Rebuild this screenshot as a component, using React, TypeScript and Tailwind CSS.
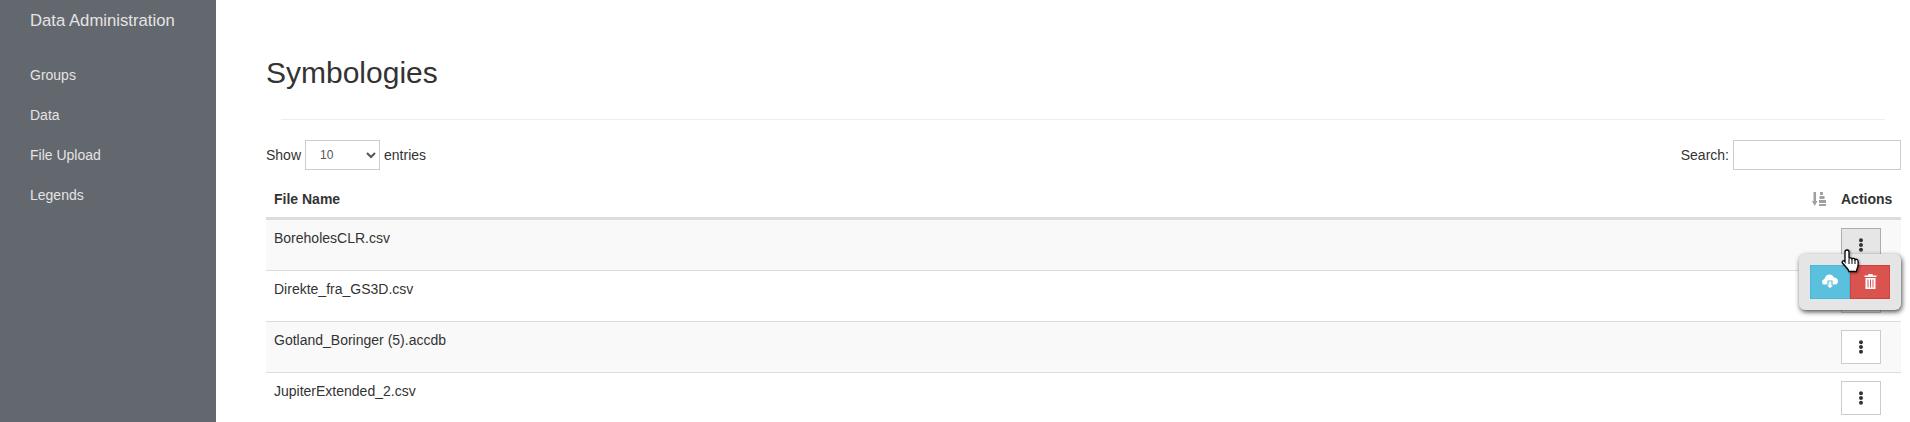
import { FaEllipsisV } from 'react-icons/fa'

const files = ['BoreholesCLR.csv', 'Direkte_fra_GS3D.csv', 'Gotland_Boringer (5).accdb', 'JupiterExtended_2.csv']
const navItems = ['Groups', 'Data', 'File Upload', 'Legends']

function HandCursor() {
  return (
    <svg width="20" height="26" viewBox="0 0 20 26" className="absolute left-0 top-[21px] z-20 drop-shadow-[1px_1px_1px_rgba(0,0,0,0.4)]">
      <path
        d="M6 1c1.300 0 2 .9 2 2v6.500c.5-1 2.700-1 3 .5.600-1 2.700-.8 3 .7.800-.8 2.800-.4 3 1.200.3 2 .2 4.300-.3 6.100-.5 1.500-1.200 2.500-1.200 4.500H8c-.4-1.800-1.600-3-3-4.500L1.500 14c-1-1.400.8-3 2.100-1.800L4 12.800V3c0-1.100.7-2 2-2z"
        fill="#fff"
        stroke="#000"
        strokeWidth="1.300"
      />
      <path d="M8 10v5M11 10.500V15M14 11v4" stroke="#000" strokeWidth="1" />
    </svg>
  )
}

function CloudDownloadIcon() {
  return (
    <svg width="16" height="15" viewBox="0 0 16 15">
      <path d="M3.500 11C1.500 11 0 9.700 0 8c0-1.500 1-2.700 2.500-3C3 2.500 5 .5 7.500.5c2 0 3.700 1.200 4.300 3 2.300 0 4.200 1.700 4.200 3.800 0 2.100-1.800 3.700-4 3.700z" fill="#fff" />
      <path d="M6 7h4v4h2.500L8 15l-4.500-4H6z" fill="#fff" stroke="#5bc0de" strokeWidth="1.200" />
    </svg>
  )
}

function TrashIcon() {
  return (
    <svg width="13" height="15" viewBox="0 0 13 15">
      <path d="M4.500 0h4l.5 1.500h3.500V3H.500V1.500H4z" fill="#fff" />
      <path d="M1.500 4h10v11h-10z" fill="#fff" />
      <path d="M3.500 5.500h1v8h-1zM6 5.500h1v8H6zM8.500 5.500h1v8h-1z" fill="#d9534f" />
    </svg>
  )
}

function SortIcon() {
  return (
    <svg width="14" height="14" viewBox="0 0 14 14" className="ml-auto block" fill="#a0a0a0">
      <path d="M1.500 0h2.500v9h1.500L2.750 14 0 9h1.500z" />
      <path d="M8 0h3v3H8zM7.500 4h5v3h-5zM7 8h7v3H7zM7 12h7v2H7z" />
    </svg>
  )
}

function ActionMenu() {
  return (
    <div className="absolute right-[-20px] top-[26px] z-10 flex rounded-md bg-[#e5e5e5] p-[11px] shadow-[1px_2px_5px_rgba(0,0,0,0.7)]">
      <button className="flex h-[34px] w-10 items-center justify-center border border-[#46b8da] bg-[#5bc0de]">
        <CloudDownloadIcon />
      </button>
      <button className="flex h-[34px] w-10 items-center justify-center border border-[#d43f3a] bg-[#d9534f]">
        <TrashIcon />
      </button>
    </div>
  )
}

export default function App() {
  return (
    <div className="flex h-[422px] overflow-hidden bg-white font-['Liberation_Sans',Arial,sans-serif] text-sm text-[#333]">
      <aside className="w-[216px] shrink-0 bg-[#63676e] pl-[30px] text-[#e4e4e4]">
        <div className="pt-[10px] text-[16.700px] leading-[22px]">Data Administration</div>
        <nav className="mt-[33px] flex flex-col gap-5">
          {navItems.map((item) => (
            <a key={item} className="leading-5">{item}</a>
          ))}
        </nav>
      </aside>

      <main className="min-w-0 flex-1 pl-[50px] pr-[9px]">
        <h1 className="pt-[53px] text-[30px] leading-[40px] text-[#333]">Symbologies</h1>
        <hr className="ml-[15px] mr-4 mt-[26px] border-[#eeeeee]" />

        <div className="mt-5 flex h-[30px] items-center justify-between">
          <label className="flex items-center gap-1">
            Show
            <select className="h-[30px] w-[75px] border border-[#cccccc] bg-white pl-[10px] text-xs text-[#555]">
              <option>10</option>
            </select>
            entries
          </label>
          <label className="flex items-center gap-1">
            Search:
            <input className="h-[30px] w-[168px] border border-[#cccccc] bg-white" />
          </label>
        </div>

        <table className="mt-[9px] w-full border-collapse">
          <thead>
            <tr className="border-b-[3px] border-[#dddddd]">
              <th className="h-[39px] pt-[2px] pl-2 text-left font-bold">File Name</th>
              <th className="w-[46px] pt-[2px]">
                <SortIcon />
              </th>
              <th className="w-[75px] pl-[15px] pt-[2px] text-left font-bold">Actions</th>
            </tr>
          </thead>
          <tbody>
            {files.map((file, i) => (
              <tr key={file} className={`border-b border-[#dddddd] ${i % 2 === 0 ? 'bg-[#f9f9f9]' : 'bg-white'}`}>
                <td className="p-2 align-top leading-5" colSpan={2}>{file}</td>
                <td className="py-2 pl-[15px] align-top">
                  <div className="relative w-10">
                    <button className={`flex h-[34px] w-10 items-center justify-center border ${i === 0 ? 'border-[#adadad] bg-[#e6e6e6]' : 'border-[#cccccc] bg-white'}`}>
                      <FaEllipsisV size={14} className="text-[#333]" />
                    </button>
                    {i === 0 && <HandCursor />}
                    {i === 0 && <ActionMenu />}
                  </div>
                </td>
              </tr>
            ))}
          </tbody>
        </table>
      </main>
    </div>
  )
}
